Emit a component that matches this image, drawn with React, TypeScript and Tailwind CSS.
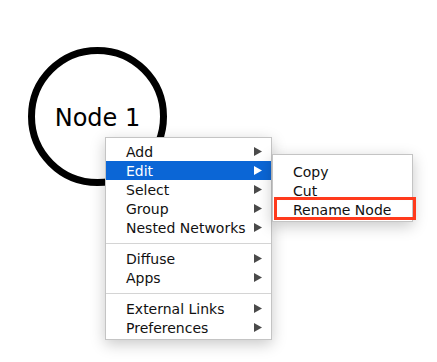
import React from 'react'

const font = { fontFamily: '"DejaVu Sans", Verdana, sans-serif' }

type Item = { label: string; sub?: boolean; active?: boolean } | 'sep'

const mainItems: Item[] = [
  { label: 'Add', sub: true },
  { label: 'Edit', sub: true, active: true },
  { label: 'Select', sub: true },
  { label: 'Group', sub: true },
  { label: 'Nested Networks', sub: true },
  'sep',
  { label: 'Diffuse', sub: true },
  { label: 'Apps', sub: true },
  'sep',
  { label: 'External Links', sub: true },
  { label: 'Preferences', sub: true },
]

function Arrow({ white }: { white?: boolean }) {
  return (
    <svg width="8" height="9" viewBox="0 0 8 9" className="shrink-0">
      <polygon points="0,0 8,4.5 0,9" fill={white ? '#ffffff' : '#4a4a4a'} />
    </svg>
  )
}

function MenuRow({ label, sub, active }: { label: string; sub?: boolean; active?: boolean }) {
  return (
    <div
      className={`flex h-[19px] items-center justify-between pl-[20px] pr-[9px] text-[14px] leading-none ${
        active ? 'bg-[#0b66d6] text-white' : 'text-[#111]'
      }`}
    >
      <span>{label}</span>
      {sub && <Arrow white={active} />}
    </div>
  )
}

export default function App() {
  return (
    <div className="relative h-[362px] w-[437px] overflow-hidden bg-white" style={font}>
      {/* node on the canvas */}
      <div className="absolute left-[28px] top-[47px] flex h-[139px] w-[139px] items-center justify-center rounded-full border-[7px] border-black">
        <span className="pt-[2px] text-[24px] text-black">Node 1</span>
      </div>

      {/* context menu */}
      <div className="absolute left-[105px] top-[137px] w-[167px] border border-[#c4c4c4] bg-white pb-[2px] pt-[4px] shadow-[0_4px_14px_rgba(0,0,0,0.22)]">
        {mainItems.map((item, i) =>
          item === 'sep' ? (
            <div key={i} className="flex h-[12px] items-center">
              <div className="h-px w-full bg-[#d4d4d4]" />
            </div>
          ) : (
            <MenuRow key={i} {...item} />
          ),
        )}
      </div>

      {/* submenu */}
      <div className="absolute left-[272px] top-[154px] w-[141px] border border-[#c4c4c4] bg-white pb-[2px] pt-[7px] shadow-[0_4px_14px_rgba(0,0,0,0.22)]">
        <MenuRow label="Copy" />
        <MenuRow label="Cut" />
        <MenuRow label="Rename Node" />
      </div>

      {/* highlight box */}
      <div className="absolute left-[274px] top-[197px] h-[23px] w-[142px] border-[3px] border-[#ff3a1c]" />
    </div>
  )
}
